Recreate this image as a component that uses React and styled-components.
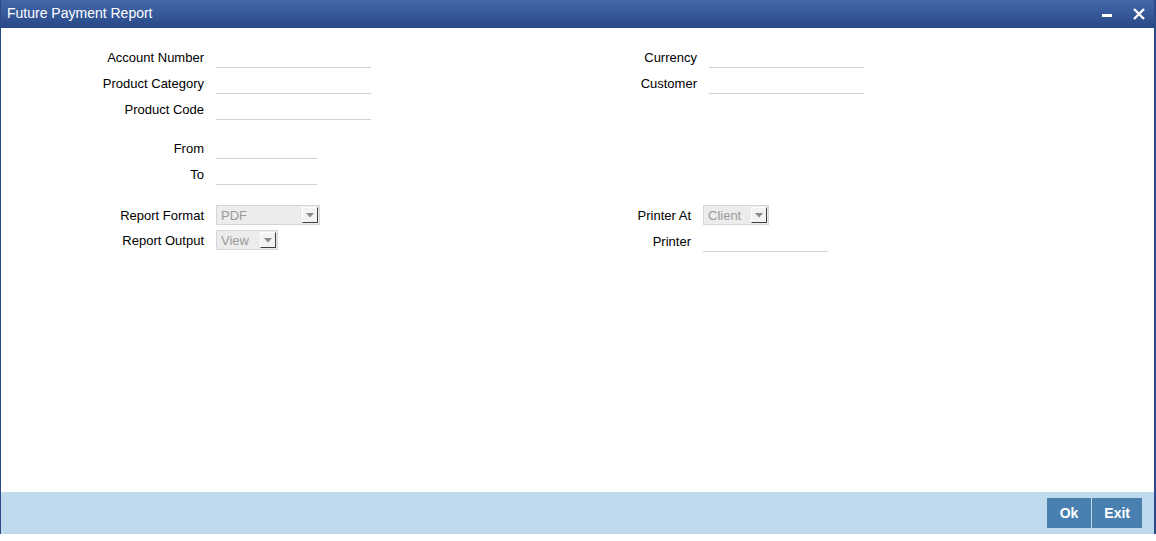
import React from 'react';
import styled, { createGlobalStyle } from 'styled-components';

const GlobalStyle = createGlobalStyle`
  html, body {
    margin: 0;
    padding: 0;
    background: #ffffff;
  }
  body {
    font-family: "Liberation Sans", Arial, sans-serif;
  }
`;

// Окно отчёта
const Window = styled.div`
  width: 1156px;
  height: 534px;
  box-sizing: border-box;
  display: flex;
  flex-direction: column;
  border-left: 1px solid #2a4a8a;
  border-right: 2px solid #2a4a8a;
  background: #ffffff;
`;

const TitleBar = styled.div`
  height: 28px;
  flex: 0 0 28px;
  display: flex;
  align-items: center;
  justify-content: space-between;
  padding: 0 9px 0 6px;
  background: linear-gradient(to bottom, #4268a8 0%, #36599a 50%, #284886 100%);
  color: #ffffff;
  font-size: 14px;
`;

const Title = styled.span`
  margin-top: -2px;
`;

const WinButtons = styled.div`
  display: flex;
  align-items: center;
  gap: 20px;
`;

const IconBtn = styled.span`
  display: flex;
  width: 12px;
  height: 12px;
  align-items: center;
  justify-content: center;
`;

const Body = styled.div`
  flex: 1;
  padding-top: 18px;
`;

const Section = styled.div`
  display: flex;
  margin-top: ${p => p.$top || 0}px;
`;

const Column = styled.div`
  width: ${p => p.$width ? p.$width + 'px' : 'auto'};
  display: flex;
  flex-direction: column;
  gap: ${p => p.$gap}px;
`;

const Row = styled.div`
  display: flex;
  align-items: center;
  height: ${p => p.$height}px;
`;

const Label = styled.label`
  width: ${p => p.$width}px;
  text-align: right;
  padding-right: 12px;
  box-sizing: content-box;
  font-size: 13px;
  color: #000000;
`;

const TextField = styled.input`
  width: ${p => p.$width}px;
  height: 22px;
  box-sizing: border-box;
  border: none;
  border-bottom: 1px solid #d2d2d2;
  padding: 0 4px;
  font-family: inherit;
  font-size: 13px;
  outline: none;
  background: transparent;
`;

const SelectBox = styled.div`
  width: ${p => p.$width}px;
  height: 20px;
  box-sizing: border-box;
  display: flex;
  align-items: center;
  justify-content: space-between;
  border: 1px solid #d6d6d6;
  background: #ececec;
  color: #9a9a9a;
  font-size: 13px;
  padding-left: 4px;
`;

const DropButton = styled.span`
  width: 16px;
  height: 16px;
  margin-right: 1px;
  box-sizing: border-box;
  display: flex;
  align-items: center;
  justify-content: center;
  background: #f2f2f2;
  border-top: 1px solid #ffffff;
  border-left: 1px solid #ffffff;
  border-right: 1px solid #404040;
  border-bottom: 1px solid #404040;
`;

const Footer = styled.div`
  height: 42px;
  flex: 0 0 42px;
  display: flex;
  justify-content: flex-end;
  align-items: center;
  gap: 1px;
  padding-right: 12px;
  background: #bfdaec;
`;

const ActionButton = styled.button`
  height: 30px;
  padding: 0 ${p => p.$pad}px;
  border: none;
  background: #4a80b0;
  color: #ffffff;
  font-family: inherit;
  font-weight: bold;
  font-size: 14px;
  cursor: pointer;
`;

const Arrow = () => (
  <svg width="8" height="5" viewBox="0 0 8 5">
    <path d="M0 0 H8 L4 4.5 Z" fill="#8a8a8a" />
  </svg>
);

const Select = ({ width, value }) => (
  <SelectBox $width={width}>
    <span>{value}</span>
    <DropButton><Arrow /></DropButton>
  </SelectBox>
);

const Field = ({ label, labelWidth, width, height = 22 }) => (
  <Row $height={height}>
    <Label $width={labelWidth}>{label}</Label>
    <TextField $width={width} />
  </Row>
);

const App = () => {
  return (
    <>
      <GlobalStyle />
      <Window>
        <TitleBar>
          <Title>Future Payment Report</Title>
          <WinButtons>
            <IconBtn>
              <svg width="10" height="12" viewBox="0 0 10 12">
                <rect x="0" y="6" width="10" height="3" fill="#ffffff" />
              </svg>
            </IconBtn>
            <IconBtn>
              <svg width="12" height="12" viewBox="0 0 12 12">
                <path d="M1 1 L11 11 M11 1 L1 11" stroke="#ffffff" strokeWidth="2.4" />
              </svg>
            </IconBtn>
          </WinButtons>
        </TitleBar>

        <Body>
          <Section>
            <Column $width={599} $gap={4}>
              <Field label="Account Number" labelWidth={203} width={155} />
              <Field label="Product Category" labelWidth={203} width={155} />
              <Field label="Product Code" labelWidth={203} width={155} />
            </Column>
            <Column $gap={4}>
              <Field label="Currency" labelWidth={97} width={155} />
              <Field label="Customer" labelWidth={97} width={155} />
            </Column>
          </Section>

          <Section $top={17}>
            <Column $width={599} $gap={4}>
              <Field label="From" labelWidth={203} width={101} />
              <Field label="To" labelWidth={203} width={101} />
            </Column>
          </Section>

          <Section $top={20}>
            <Column $width={599} $gap={5}>
              <Row $height={20}>
                <Label $width={203}>Report Format</Label>
                <Select width={104} value="PDF" />
              </Row>
              <Row $height={20}>
                <Label $width={203}>Report Output</Label>
                <Select width={62} value="View" />
              </Row>
            </Column>
            <Column $gap={5}>
              <Row $height={20}>
                <Label $width={91}>Printer At</Label>
                <Select width={66} value="Client" />
              </Row>
              <Row $height={22}>
                <Label $width={91}>Printer</Label>
                <TextField $width={125} />
              </Row>
            </Column>
          </Section>
        </Body>

        <Footer>
          <ActionButton $pad={13}>Ok</ActionButton>
          <ActionButton $pad={12}>Exit</ActionButton>
        </Footer>
      </Window>
    </>
  );
};

export default App;
